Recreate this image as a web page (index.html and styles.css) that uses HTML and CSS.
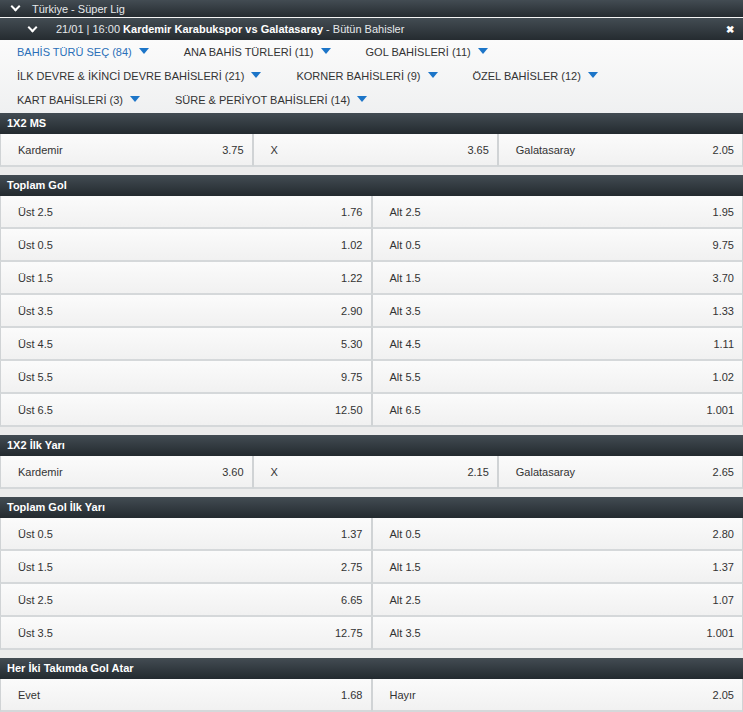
FILE: index.html
```html
<!DOCTYPE html>
<html lang="tr">
<head>
    <meta charset="UTF-8">
    <meta name="viewport" content="width=device-width, initial-scale=1.0">
    <title>Kardemir Karabukspor vs Galatasaray</title>
    <link rel="stylesheet" href="styles.css">
</head>
<body>

<div class="league-bar">
    <span class="chevron"></span>
    <span>Türkiye - Süper Lig</span>
</div>

<div class="match-bar">
    <span class="chevron"></span>
    <span class="match-title">21/01 | 16:00 <b>Kardemir Karabukspor vs Galatasaray</b> - Bütün Bahisler</span>
    <span class="close">&#10006;</span>
</div>

<div class="filters">
    <div class="filter-row">
        <a class="filter active">BAHİS TÜRÜ SEÇ (84)<i class="caret"></i></a>
        <a class="filter">ANA BAHİS TÜRLERİ (11)<i class="caret"></i></a>
        <a class="filter">GOL BAHİSLERİ (11)<i class="caret"></i></a>
    </div>
    <div class="filter-row">
        <a class="filter">İLK DEVRE &amp; İKİNCİ DEVRE BAHİSLERİ (21)<i class="caret"></i></a>
        <a class="filter">KORNER BAHİSLERİ (9)<i class="caret"></i></a>
        <a class="filter">ÖZEL BAHİSLER (12)<i class="caret"></i></a>
    </div>
    <div class="filter-row">
        <a class="filter">KART BAHİSLERİ (3)<i class="caret"></i></a>
        <a class="filter">SÜRE &amp; PERİYOT BAHİSLERİ (14)<i class="caret"></i></a>
    </div>
</div>

<div class="market">
    <div class="market-title">1X2 MS</div>
    <div class="odds three">
        <div class="cell"><span>Kardemir</span><span>3.75</span></div>
        <div class="cell"><span>X</span><span>3.65</span></div>
        <div class="cell"><span>Galatasaray</span><span>2.05</span></div>
    </div>
</div>

<div class="market">
    <div class="market-title">Toplam Gol</div>
    <div class="odds two">
        <div class="cell"><span>Üst 2.5</span><span>1.76</span></div>
        <div class="cell"><span>Alt 2.5</span><span>1.95</span></div>
        <div class="cell"><span>Üst 0.5</span><span>1.02</span></div>
        <div class="cell"><span>Alt 0.5</span><span>9.75</span></div>
        <div class="cell"><span>Üst 1.5</span><span>1.22</span></div>
        <div class="cell"><span>Alt 1.5</span><span>3.70</span></div>
        <div class="cell"><span>Üst 3.5</span><span>2.90</span></div>
        <div class="cell"><span>Alt 3.5</span><span>1.33</span></div>
        <div class="cell"><span>Üst 4.5</span><span>5.30</span></div>
        <div class="cell"><span>Alt 4.5</span><span>1.11</span></div>
        <div class="cell"><span>Üst 5.5</span><span>9.75</span></div>
        <div class="cell"><span>Alt 5.5</span><span>1.02</span></div>
        <div class="cell"><span>Üst 6.5</span><span>12.50</span></div>
        <div class="cell"><span>Alt 6.5</span><span>1.001</span></div>
    </div>
</div>

<div class="market">
    <div class="market-title">1X2 İlk Yarı</div>
    <div class="odds three">
        <div class="cell"><span>Kardemir</span><span>3.60</span></div>
        <div class="cell"><span>X</span><span>2.15</span></div>
        <div class="cell"><span>Galatasaray</span><span>2.65</span></div>
    </div>
</div>

<div class="market">
    <div class="market-title">Toplam Gol İlk Yarı</div>
    <div class="odds two">
        <div class="cell"><span>Üst 0.5</span><span>1.37</span></div>
        <div class="cell"><span>Alt 0.5</span><span>2.80</span></div>
        <div class="cell"><span>Üst 1.5</span><span>2.75</span></div>
        <div class="cell"><span>Alt 1.5</span><span>1.37</span></div>
        <div class="cell"><span>Üst 2.5</span><span>6.65</span></div>
        <div class="cell"><span>Alt 2.5</span><span>1.07</span></div>
        <div class="cell"><span>Üst 3.5</span><span>12.75</span></div>
        <div class="cell"><span>Alt 3.5</span><span>1.001</span></div>
    </div>
</div>

<div class="market">
    <div class="market-title">Her İki Takımda Gol Atar</div>
    <div class="odds two">
        <div class="cell"><span>Evet</span><span>1.68</span></div>
        <div class="cell"><span>Hayır</span><span>2.05</span></div>
    </div>
</div>

</body>
</html>
```

FILE: styles.css
```css
body {
    font-family: "Liberation Sans", Arial, sans-serif;
    font-size: 11px;
    margin: 0;
    padding: 0;
    background-color: #ececec;
    color: #333;
}
.league-bar,
.match-bar {
    display: flex;
    align-items: center;
    color: #e6e9eb;
    background: linear-gradient(#434c53, #252b30);
}
.league-bar {
    height: 17px;
    padding-left: 11px;
    border-bottom: 1px solid #f4f4f4;
}
.match-bar {
    height: 22px;
    padding-left: 28px;
    padding-right: 9px;
}
.chevron {
    width: 5px;
    height: 5px;
    border-right: 2px solid #fff;
    border-bottom: 2px solid #fff;
    transform: rotate(45deg);
    margin: -4px 13px 0 1px;
}
.match-bar .chevron {
    margin-right: 20px;
}
.match-bar b {
    color: #fff;
}
.match-title {
    flex: 1;
}
.close {
    color: #fff;
    font-size: 10px;
    font-weight: bold;
}
.filters {
    background: linear-gradient(#fbfbfb, #eff0f1);
    padding: 0 0 1px 17px;
}
.filter-row {
    display: flex;
    height: 24px;
    align-items: center;
}
.filter {
    color: #333;
    margin-right: 35px;
    cursor: pointer;
}
.filter.active {
    color: #2a6fb8;
}
.caret {
    display: inline-block;
    width: 0;
    height: 0;
    margin-left: 7px;
    vertical-align: 2px;
    border-left: 5px solid transparent;
    border-right: 5px solid transparent;
    border-top: 6px solid #1c75c8;
}
.market {
    margin-bottom: 8px;
}
.market-title {
    height: 21px;
    line-height: 21px;
    padding-left: 7px;
    font-weight: bold;
    color: #fff;
    background: linear-gradient(#434c53, #232a2f);
}
.odds {
    display: grid;
}
.odds.three {
    grid-template-columns: 34% 33% 33%;
}
.odds.two {
    grid-template-columns: 50% 50%;
}
.cell {
    display: flex;
    justify-content: space-between;
    align-items: center;
    box-sizing: border-box;
    height: 33px;
    padding: 0 8px 0 17px;
    background: linear-gradient(#fbfbfb, #f1f1f1);
    border-left: 1px solid #d0d3d5;
    border-right: 1px solid #d0d3d5;
    border-bottom: 2px solid #d5d8da;
    cursor: pointer;
}
```
